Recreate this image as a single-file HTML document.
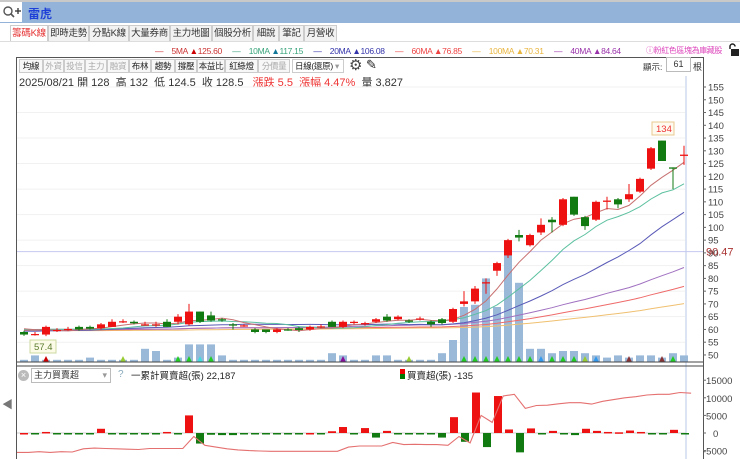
<!DOCTYPE html>
<html><head><meta charset="utf-8">
<style>
*{margin:0;padding:0;box-sizing:border-box}
body{width:740px;height:459px;overflow:hidden;background:#fff;font-family:"Liberation Sans","Noto Sans CJK TC",sans-serif;position:relative;font-size:11px;color:#333}
.abs{position:absolute;white-space:nowrap}
.top{position:absolute;left:0;top:0;width:740px;height:23px;background:#94b3d8;border-top:2px solid #c9c9c9}
.srch{position:absolute;left:0;top:2px;width:22px;height:20px;background:#fff}
.tab{position:absolute;top:25px;height:17px;border:1px solid #ccc;background:#f2f2f2;font-size:9.5px;line-height:15px;text-align:center;color:#333;white-space:nowrap;overflow:hidden;letter-spacing:-0.3px}
.tb{position:absolute;top:59px;height:14px;border:1px solid #ccc;background:#f7f7f7;font-size:8.5px;line-height:12px;text-align:center;color:#222;white-space:nowrap;overflow:hidden;letter-spacing:-0.3px}
.tb.g{color:#aaa}
</style></head><body>
<div class="top"></div>
<div class="srch"><svg width="22" height="20"><circle cx="8" cy="9" r="4" fill="none" stroke="#555" stroke-width="1.4"/><line x1="11" y1="12" x2="14" y2="15" stroke="#555" stroke-width="1.6"/><line x1="15" y1="9" x2="21" y2="9" stroke="#333" stroke-width="1.3"/><line x1="18" y1="6" x2="18" y2="12" stroke="#333" stroke-width="1.3"/></svg></div>
<div class="abs" style="left:28px;top:5px;color:#1d3fd8;font-weight:bold;font-size:12px">雷虎</div>

<div class="tab" style="left:10px;width:38px;background:#fff;color:#e53030;border-bottom-color:#fff">籌碼K線</div>
<div class="tab" style="left:48px;width:41px">即時走勢</div>
<div class="tab" style="left:89px;width:40px">分點K線</div>
<div class="tab" style="left:129px;width:41px">大量券商</div>
<div class="tab" style="left:170px;width:42px">主力地圖</div>
<div class="tab" style="left:212px;width:41px">個股分析</div>
<div class="tab" style="left:253px;width:26px">細說</div>
<div class="tab" style="left:279px;width:25px">筆記</div>
<div class="tab" style="left:304px;width:33px">月營收</div>
<div class="abs" style="left:0;top:41px;width:740px;height:1px;background:#ddd"></div>

<div class="abs" style="left:155px;top:46px;font-size:8.5px;letter-spacing:-0.3px">
<span style="color:#c33">—&nbsp;&nbsp;&nbsp;&nbsp;5MA <span style="color:#c00">▲</span>125.60</span>&nbsp;&nbsp;&nbsp;&nbsp;
<span style="color:#3aa57c">—&nbsp;&nbsp;&nbsp;&nbsp;10MA <span style="color:#179">▲</span>117.15</span>&nbsp;&nbsp;&nbsp;&nbsp;
<span style="color:#33a">—&nbsp;&nbsp;&nbsp;&nbsp;20MA <span>▲</span>106.08</span>&nbsp;&nbsp;&nbsp;&nbsp;
<span style="color:#e44">—&nbsp;&nbsp;&nbsp;&nbsp;60MA ▲76.85</span>&nbsp;&nbsp;&nbsp;&nbsp;
<span style="color:#e9b640">—&nbsp;&nbsp;&nbsp;&nbsp;100MA ▲70.31</span>&nbsp;&nbsp;&nbsp;&nbsp;
<span style="color:#93a">—&nbsp;&nbsp;&nbsp;&nbsp;40MA ▲84.64</span></div>
<div class="abs" style="left:646px;top:45px;font-size:8px;letter-spacing:-0.4px;color:#d4b">ⓘ粉紅色區塊為庫藏股</div>
<svg class="abs" style="left:728px;top:43px" width="12" height="14"><path d="M2 6 V3.5 A2.5 2.5 0 0 1 7 3.5" fill="none" stroke="#222" stroke-width="1.5"/><rect x="3" y="6" width="8" height="7" fill="#222"/></svg>

<div class="abs" style="left:16px;top:57px;width:688px;height:402px;border-left:1px solid #555;border-top:1px solid #555;border-right:1px solid #555"></div>

<div class="tb" style="left:19px;width:24px">均線</div>
<div class="tb g" style="left:43px;width:21px">外資</div>
<div class="tb g" style="left:64px;width:21px">投信</div>
<div class="tb g" style="left:85px;width:22px">主力</div>
<div class="tb g" style="left:107px;width:22px">融資</div>
<div class="tb" style="left:129px;width:22px">布林</div>
<div class="tb" style="left:151px;width:24px">趨勢</div>
<div class="tb" style="left:175px;width:22px">撐壓</div>
<div class="tb" style="left:197px;width:28px">本益比</div>
<div class="tb" style="left:225px;width:33px">紅綠燈</div>
<div class="tb g" style="left:258px;width:32px">分價量</div>
<div class="tb" style="left:292px;width:52px;background:#fff;text-align:left;padding-left:2px">日線(還原) <span style="color:#999">▾</span></div>
<div class="abs" style="left:349px;top:56px;font-size:15px;color:#444">⚙</div>
<div class="abs" style="left:366px;top:57px;font-size:13px;color:#222">✎</div>
<div class="abs" style="left:643px;top:61px;font-size:8.5px">顯示:</div>
<div class="abs" style="left:666px;top:57px;width:25px;height:15px;border:1px solid #bbb;font-size:9px;text-align:center;line-height:13px">61</div>
<div class="abs" style="left:693px;top:60px;font-size:9px">根</div>

<div class="abs" style="left:19px;top:74px;font-size:11px;color:#333">2025/08/21 開 128&nbsp; 高 132&nbsp; 低 124.5&nbsp; 收 128.5&nbsp;&nbsp; <span style="color:#e33">漲跌 5.5&nbsp; 漲幅 4.47%</span>&nbsp; 量 3,827</div>

<div class="abs" style="left:2px;top:396px;font-size:11px;color:#777">◀</div>

<svg id="ch" class="abs" style="left:0;top:0" width="740" height="459"></svg>

<div class="abs" style="left:18px;top:370px;width:11px;height:11px;border-radius:50%;background:#bbb;color:#fff;font-size:9px;line-height:11px;text-align:center">×</div>
<div class="abs" style="left:31px;top:368px;width:80px;height:15px;border:1px solid #bbb;background:#fff;font-size:9px;line-height:13px;padding-left:2px">主力買賣超 <span style="position:absolute;right:3px;color:#999">▾</span></div>
<div class="abs" style="left:118px;top:369px;font-size:10px;color:#8ab">?</div>
<div class="abs" style="left:131px;top:368px;font-size:9.5px;color:#222">一累計買賣超(張) 22,187</div>
<div class="abs" style="left:407px;top:368px;font-size:9.5px;color:#222">買賣超(張) -135</div>
<div class="abs" style="left:400px;top:369px;width:5px;height:5px;background:#e00"></div>
<div class="abs" style="left:400px;top:374px;width:5px;height:5px;background:#070"></div>

<script>
var s='';
function R(x,y,w,h,c){s+='<rect x="'+x+'" y="'+y+'" width="'+w+'" height="'+h+'" fill="'+c+'"/>';}
function L(x1,y1,x2,y2,c,w){s+='<line x1="'+x1+'" y1="'+y1+'" x2="'+x2+'" y2="'+y2+'" stroke="'+c+'" stroke-width="'+(w||1)+'"/>';}
function T(x,y,t,c,f){s+='<text x="'+x+'" y="'+y+'" fill="'+(c||'#333')+'" font-size="'+(f||10)+'" font-family="Liberation Sans,sans-serif">'+t+'</text>';}
function Y(p){return 87+(155-p)*2.552;}
function X(i){return 24+i*11;}
for(var p=55;p<=155;p+=10){L(17,Y(p),685,Y(p),'#f1f1f1');}
for(var p=50;p<=155;p+=5){T(708,Y(p)+3.5,p,'#444',9.5);L(703,Y(p),706,Y(p),'#666');}
L(686,76,686,459,'#b9c9ea');
L(17,Y(90.47),703,Y(90.47),'#c5c8f0');
T(706,Y(90.47)+4,'90.47','#a33',11);
var d=[[59,58,59.5,57.5],[58,58.2,59,57.6],[58,61,61.5,57.4],[59.5,59.8,60.5,59],[60,60.2,61,59.5],[61,60,61.5,59.5],[61,60.3,61.5,60],[60.5,62,62.5,60],[61,63,64,61],[63,63.2,64,62.5],[63,62.4,63.5,62],[61.5,62,63,61.5],[62,62,63,61],[63,61,64,61],[63,65,66,62],[62,67,70,61.5],[67,63,67,62.5],[65.5,63.5,67,63],[64,63.8,64.5,63],[62,61.5,62.5,60],[61.5,61.6,62,61],[60,59,60.5,58.5],[60,59,60,58.5],[59,60,60.5,58.5],[60,59.8,60.5,59.5],[60.5,59.8,61,59],[60,61,61.5,59.5],[61,61.2,62,60.5],[63,61,63.5,61],[61,63,63.5,60.5],[62.5,63,63.5,62],[62,62.5,63,61.5],[63,64,64.5,62.5],[65,63.5,66,63],[64,65,65.5,63.5],[63.5,63,64,62.5],[64,64.3,65,63.5],[63,62,63.5,61],
[64,62.5,64.5,62],[63,68,68.5,62.5],[70,71,75,69],[71,76,77,70],[78,78.5,80,74],[83,86,86.5,81],[89,95,95.5,88],[97,96,99,94.5],[93,97,97.5,92.5],[98,101,103.5,97],[103,102,104,98],[101,111,111.5,100.5],[112,105,112,104.5],[104,100.5,104.5,99],[103,110,110.5,102.5],[110,110.5,112,107],[111,109,111.5,107.5],[111,113,117,110],[114,119,119.5,113.5],[123,131,131.5,122.5],[134,126,134,126],[123.5,123,123.5,115],[128,128.5,132,124.5]];
var cl=[];for(var k=0;k<100;k++)cl.push(60+Math.sin(k/5)*1.5+(k<50?-1:0));
d.forEach(function(a){cl.push(a[1]);});
function ma(n,c){var pts=[];for(var i=0;i<d.length;i++){var j=100+i,sm=0;for(var k=0;k<n;k++)sm+=cl[j-k];pts.push(X(i)+','+Y(sm/n).toFixed(1));}s+='<polyline fill="none" stroke="'+c+'" stroke-width="1" points="'+pts.join(' ')+'"/>';}
var v=[1,3,1,1,1,1,2,1,1,1,1,6,5,1,2,8,8,8,3,1,1,1,1,1,1,1,1,1,4,3,1,1,3,3,1,1,1,1,4,10,25,26,38,25,49,36,6,6,4,5,5,4,3,2,3,2,3,3,2,4,3];
for(var i=0;i<61;i++){var h=v[i]*2.2;R(X(i)-4,362-h,8,h,'#9ab8d8');}
[[2,'#c00'],[9,'#9c3'],[16,'#4dd'],[15,'#2c2'],[14,'#2c2'],[17,'#2c2'],[29,'#819'],[35,'#9c3'],[40,'#2c2'],[41,'#2c2'],[42,'#2c2'],[43,'#2c2'],[44,'#2c2'],[45,'#2c2'],[46,'#2c2'],[47,'#39e'],[48,'#2c2'],[49,'#2c2'],[50,'#2c2'],[51,'#9c3'],[52,'#39e'],[55,'#833'],[58,'#833'],[59,'#2c2']].forEach(function(t){var x=X(t[0]);s+='<polygon points="'+(x-3)+',362 '+(x+3)+',362 '+x+',356" fill="'+t[1]+'"/>';});
ma(100,'#f0c070');ma(60,'#ef6a6a');ma(40,'#a070c0');ma(20,'#5a5ab8');ma(10,'#5cc0a0');ma(5,'#c87070');
for(var i=0;i<d.length;i++){var a=d[i],x=X(i),up=a[1]>=a[0],c=up?'#ee1111':'#117a11';L(x,Y(a[2]),x,Y(a[3]),c);var t=Y(Math.max(a[0],a[1])),b=Y(Math.min(a[0],a[1]));R(x-4,t,8,Math.max(1.2,b-t),c);}
L(17,362,703,362,'#444');L(17,366,703,366,'#444');
s+='<rect x="30" y="340" width="26" height="13" fill="#fbfbe8" stroke="#cdd8a0"/>';T(34,350,'57.4','#5a7a2a',9.5);
s+='<rect x="652" y="122" width="22" height="13" fill="#fffaf0" stroke="#e8c890"/>';T(656,132,'134','#e33',9.5);
function Z(v){return 433-v*0.00352;}
[15000,10000,5000,0,-5000].forEach(function(v){T(v<0?703:(v==0?713:706),Z(v)+4,v,'#444',9.5);L(703,Z(v),706,Z(v),'#666');});
L(17,Z(0),686,Z(0),'#ccc');
var bb={1:-200,2:300,3:-200,4:-200,5:-100,6:-200,7:1200,8:-100,9:-100,10:-100,11:-100,12:-200,13:300,14:-100,15:5000,16:-3000,17:-500,18:-600,19:-600,20:-300,21:-100,22:-100,23:-100,24:-100,25:-100,27:-100,28:500,29:1700,30:-300,31:1400,32:-1300,33:600,34:-200,35:-200,36:-200,37:-100,38:-1300,39:4500,40:-2500,41:11500,42:-4000,43:10500,44:1000,45:-5500,46:1300,47:-200,48:600,49:-100,50:-600,51:1200,52:600,53:300,54:200,55:700,56:300,57:-200,58:-200,59:900,60:-135};
for(var i=0;i<=60;i++){var val=bb[i]||0,x=24+i*11+(i>=39?1:0),c=val>=0?'#ee1111':'#117a11';var y1=Z(Math.max(val,0)),y2=Z(Math.min(val,0));R(x-4,y1,8,Math.max(1.5,y2-y1),c);}
var cum=[-5500,-5500,-5300,-5500,-5300,-5400,-4500,-4300,-4400,-4500,-4600,-4700,-4400,-4400,-4400,-4400,-1000,
-3500,-4000,-4500,-4800,-5000,-5100,-5200,-5200,-5200,-5200,-5200,-5200,-5200,-4000,-3700,-3700,-3700,-2700,-3300,-3200,-3300,-3300,
-3500,-1000,-2800,5000,3000,10500,11000,7000,
7800,7900,8300,8600,8600,8200,9000,9500,10000,10300,10800,11000,11000,11500,11300];
var pts=[];for(var i=0;i<cum.length;i++){pts.push((17+i*11.05).toFixed(1)+','+Z(cum[i]).toFixed(1));}
s+='<polyline fill="none" stroke="#e57070" stroke-width="1.1" points="'+pts.join(' ')+'"/>';
document.getElementById('ch').innerHTML=s;
</script>
</body></html>
